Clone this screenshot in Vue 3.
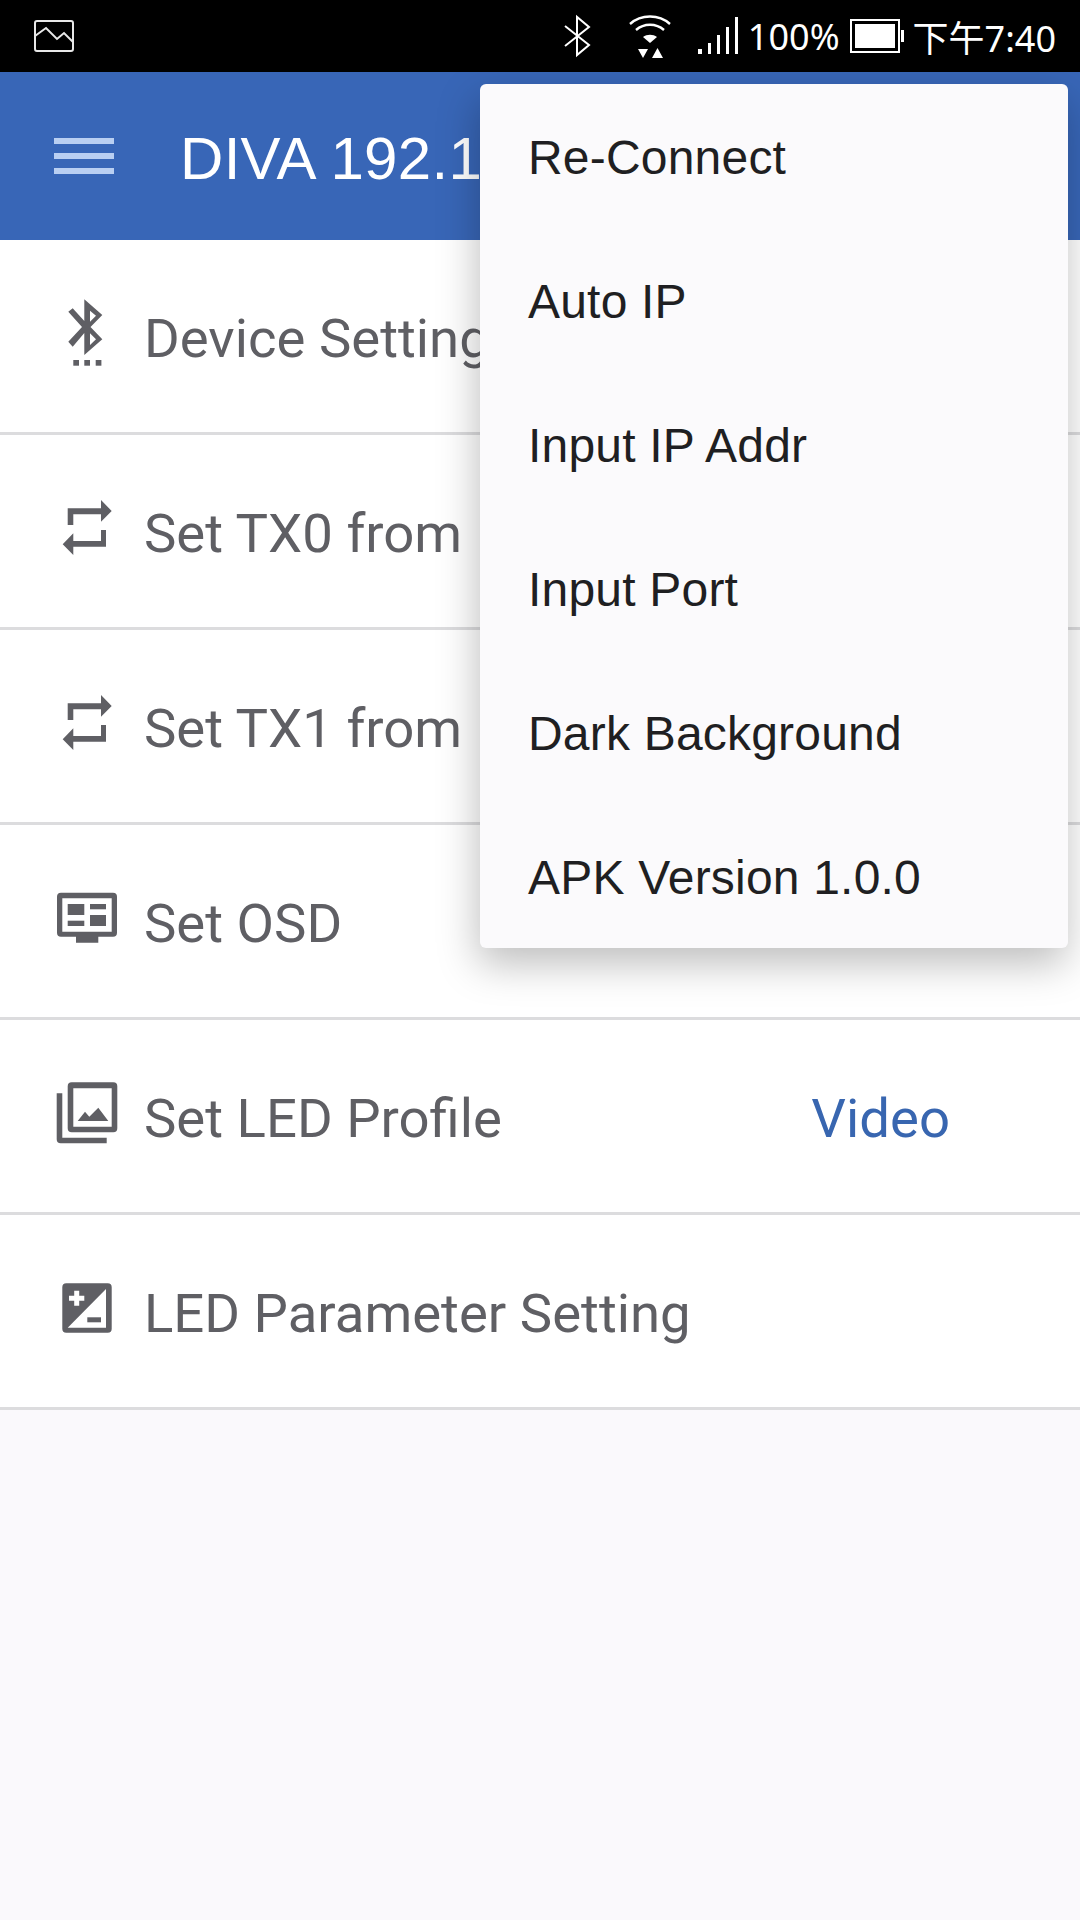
<template>
  <div class="screen">
    <!-- Status bar -->
    <div class="status-bar">
      <svg class="sb-picture" width="40" height="32" viewBox="0 0 40 32" fill="none" stroke="#e8e8e8" stroke-width="2">
        <rect x="1" y="1" width="38" height="30" rx="2" />
        <path d="M1 16 L12 8 L23 19 L30 13 L39 22" />
      </svg>
      <div class="sb-right">
        <svg class="sb-bt" width="28" height="42" viewBox="0 0 28 42" fill="none" stroke="#fff" stroke-width="2">
          <path d="M2 11 L26 30 L14 40 V2 L26 12 L2 31" />
        </svg>
        <svg class="sb-wifi" width="44" height="46" viewBox="0 0 44 46">
          <g fill="none" stroke="#fff" stroke-width="2.4">
            <path d="M2 11 C13 1 31 1 42 11" />
            <path d="M8 17 C16 10 28 10 36 17" />
          </g>
          <path d="M15 24 C19 21 25 21 29 24 L22 30 Z" fill="#fff" />
          <path d="M10 36 H20 L15 45 Z M24 45 H35 L29.500 35 Z" fill="#fff" />
        </svg>
        <svg class="sb-signal" width="42" height="38" viewBox="0 0 42 38" fill="#fff">
          <rect x="0" y="32" width="4" height="5" />
          <rect x="10" y="26" width="3" height="11" />
          <rect x="19" y="18" width="3" height="19" />
          <rect x="28" y="10" width="3" height="27" />
          <rect x="37" y="0" width="3" height="37" />
        </svg>
        <span class="sb-text pct">100%</span>
        <div class="battery">
          <div class="battery-fill"></div>
          <div class="battery-cap"></div>
        </div>
        <span class="sb-text time">下午7:40</span>
      </div>
    </div>

    <!-- App bar -->
    <div class="app-bar">
      <div class="hamburger"><i></i><i></i><i></i></div>
      <span class="title">DIVA 192.1</span>
    </div>

    <!-- Settings list -->
    <div class="list">
      <div v-for="row in rows" :key="row.label" class="row">
        <div class="row-icon">
          <svg v-if="row.icon === 'bt'" width="60" height="72" viewBox="0 0 60 72" fill="#5f5f64">
            <path fill-rule="evenodd" d="M27.300 -0.700 L45.300 15 L33.500 27 L45.300 39.300 L27.300 55 V33 L15.700 46.700 L11.300 41.700 L25 27 L11.300 11.700 L15.700 8.300 L27.300 21 Z M33 10.700 V21.700 L39 15.700 Z M33 33.300 V45 L39 39.300 Z" />
            <rect x="16.300" y="60" width="5.700" height="5.700" />
            <rect x="27.300" y="60" width="5.700" height="5.700" />
            <rect x="38.700" y="60" width="5.700" height="5.700" />
          </svg>
          <svg v-else-if="row.icon === 'repeat'" width="60" height="60" viewBox="0 2 60 60" fill="#5f5f64">
            <path d="M10.700 9.300 H44 V1 L54.700 12 L44 22.700 V15.300 H16.300 V26 H10.700 Z" />
            <path d="M49 31 V47.700 H16.300 V56 L5.700 45.300 L16.300 34.300 V42 H44 V31 Z" />
          </svg>
          <svg v-else-if="row.icon === 'osd'" width="60" height="60" viewBox="0 0 60 60" fill="#5f5f64">
            <path fill-rule="evenodd" d="M4 1.700 H56 Q60 1.700 60 5.700 V41.700 Q60 45.700 56 45.700 H41.300 V51.700 H19 V45.700 H4 Q0 45.700 0 41.700 V5.700 Q0 1.700 4 1.700 Z M5.300 7.300 V40.700 H54.700 V7.300 Z" />
            <rect x="10.700" y="13" width="16.600" height="11" />
            <rect x="10.700" y="29.700" width="16.600" height="5.300" />
            <rect x="33" y="13" width="16" height="5.300" />
            <rect x="33" y="24" width="16" height="11" />
          </svg>
          <svg v-else-if="row.icon === 'photos'" width="60" height="60" viewBox="0 0 60 60" fill="#5f5f64">
            <path fill-rule="evenodd" d="M14.700 -3.700 H56.300 Q60.300 -3.700 60.300 0.300 V42.300 Q60.300 46.300 56.300 46.300 H14.700 Q10.700 46.300 10.700 42.300 V0.300 Q10.700 -3.700 14.700 -3.700 Z M16.300 2.300 V40.700 H54.700 V2.300 Z" />
            <path d="M-0.300 7.300 H5.300 V51.700 H49.700 V57.300 H3.700 Q-0.300 57.300 -0.300 53.300 Z" />
            <path d="M20.700 35 L28 25.700 L32.300 30.700 L41.300 21.700 L51.300 35 Z" />
          </svg>
          <svg v-else width="60" height="60" viewBox="0 0 60 60" fill="#5f5f64">
            <path fill-rule="evenodd" d="M9.300 2.300 H50.700 Q54.700 2.300 54.700 6.300 V47.700 Q54.700 51.700 50.700 51.700 H9.300 Q5.300 51.700 5.300 47.700 V6.300 Q5.300 2.300 9.300 2.300 Z M49 8 L10.700 46.700 H49 Z" />
            <path d="M17.200 9.700 H22.200 V14.800 H27.300 V19.800 H22.200 V24.700 H17.200 V19.800 H12 V14.800 H17.200 Z" fill="#fff" />
            <rect x="30.300" y="36.300" width="13.700" height="5" />
          </svg>
        </div>
        <span class="row-label">{{ row.label }}</span>
        <span v-if="row.value" class="row-value">{{ row.value }}</span>
      </div>
    </div>

    <!-- Overflow menu -->
    <div class="menu">
      <div v-for="item in menuItems" :key="item" class="menu-item">{{ item }}</div>
    </div>
  </div>
</template>

<script setup>
const rows = [
  { icon: 'bt', label: 'Device Settings' },
  { icon: 'repeat', label: 'Set TX0 from' },
  { icon: 'repeat', label: 'Set TX1 from' },
  { icon: 'osd', label: 'Set OSD' },
  { icon: 'photos', label: 'Set LED Profile', value: 'Video' },
  { icon: 'exposure', label: 'LED Parameter Setting' },
]

const menuItems = ['Re-Connect', 'Auto IP', 'Input IP Addr', 'Input Port', 'Dark Background', 'APK Version 1.0.0']
</script>

<style>
html, body {
  margin: 0;
  background: #faf9fc;
}
</style>

<style scoped>
.screen {
  position: relative;
  width: 1080px;
  height: 1920px;
  overflow: hidden;
  background: #faf9fc;
  font-family: Roboto, sans-serif;
}

svg {
  overflow: visible;
}

.status-bar {
  height: 72px;
  background: #000;
  display: flex;
  align-items: center;
  justify-content: space-between;
  padding: 0 24px 0 34px;
  box-sizing: border-box;
}

.sb-right {
  display: flex;
  align-items: center;
}

.sb-bt { margin-right: 37px; }
.sb-wifi { margin-right: 26px; }
.sb-signal { margin-right: 8px; }

.sb-text {
  color: #fff;
  font-size: 36px;
  font-family: "Noto Sans", "Noto Sans CJK SC", sans-serif;
}

.pct { margin-right: 10px; }
.time { margin-left: 10px; }

.battery {
  position: relative;
  width: 50px;
  height: 34px;
  margin-right: 3px;
  border: 2px solid #fff;
  padding: 3px;
  box-sizing: border-box;
}

.battery-fill {
  height: 100%;
  background: #fff;
}

.battery-cap {
  position: absolute;
  right: -6px;
  top: 9px;
  width: 3px;
  height: 12px;
  background: #fff;
}

.app-bar {
  height: 168px;
  background: #3866b7;
  display: flex;
  align-items: center;
  padding-left: 54px;
  box-sizing: border-box;
}

.hamburger {
  width: 60px;
  display: flex;
  flex-direction: column;
  gap: 9px;
  margin-right: 66px;
}

.hamburger i {
  display: block;
  height: 6px;
  background: #b9cff2;
}

.title {
  color: #fff;
  font-size: 60px;
  font-family: "Liberation Sans", sans-serif;
  letter-spacing: 0.3px;
  white-space: nowrap;
  padding-top: 4px;
}

.list {
  background: #fff;
}

.row {
  height: 195px;
  box-sizing: border-box;
  border-bottom: 3px solid #dcdcde;
  display: flex;
  align-items: center;
  padding-left: 57px;
}

.row-icon {
  width: 60px;
  height: 72px;
  margin-right: 27px;
  display: flex;
  align-items: center;
  justify-content: center;
  flex: none;
}

.row-label {
  color: #5f5f64;
  font-size: 54.5px;
  white-space: nowrap;
  padding-top: 3px;
}

.row-value {
  margin-left: auto;
  margin-right: 130px;
  color: #3866b0;
  font-size: 54.5px;
  padding-top: 3px;
}

.menu {
  position: absolute;
  left: 480px;
  top: 84px;
  width: 588px;
  background: #fbfafc;
  border-radius: 6px;
  box-shadow: -2px 16px 40px rgba(0, 0, 0, 0.26);
}

.menu-item {
  height: 144px;
  display: flex;
  align-items: center;
  padding: 2px 0 0 48px;
  box-sizing: border-box;
  color: #1f1f22;
  font-size: 48px;
  letter-spacing: 0.2px;
  font-family: "Liberation Sans", sans-serif;
}
</style>
